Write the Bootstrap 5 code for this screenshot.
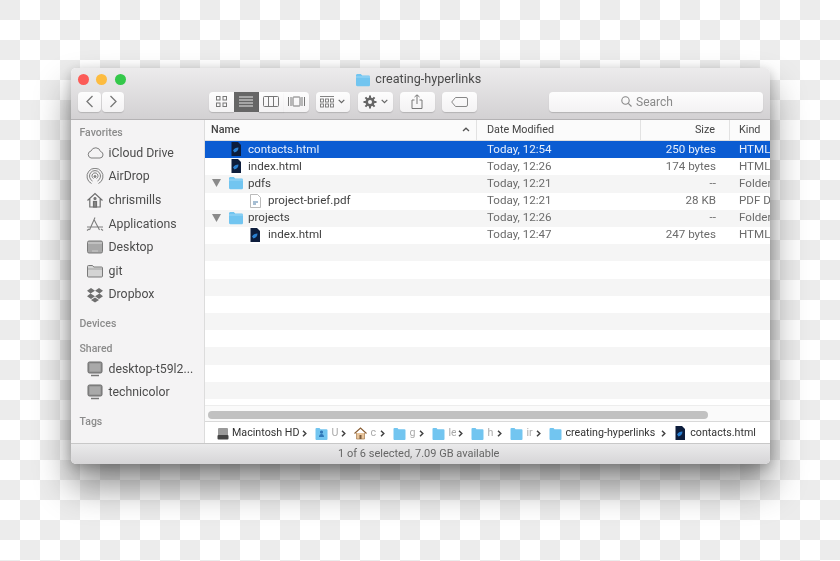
<!DOCTYPE html>
<html lang="en">
<head>
<meta charset="utf-8">
<title>creating-hyperlinks</title>
<link rel="stylesheet" href="https://cdn.jsdelivr.net/npm/bootstrap@5.3.0/dist/css/bootstrap.min.css">
<style>
html,body{height:100%;overflow:hidden}
body{background-color:#fff;background-image:conic-gradient(#fff 25%,#ececec 0 50%,#fff 0 75%,#ececec 0);background-size:40px 40px;padding:68px 0 0 70.5px;font-family:Roboto,"Liberation Sans",sans-serif;color:#3a3a3a;font-size:12px}
.fwin{width:699.5px;height:396px;border-radius:5px;overflow:hidden;background:#fff;box-shadow:0 22px 36px rgba(0,0,0,.45),0 3px 12px rgba(0,0,0,.22);filter:blur(.35px)}
.fchrome{height:52px;background:linear-gradient(#ecebec,#d3d1d3);border-bottom:1px solid #b4b2b4;flex:none}
.ftitle{height:23px;font-size:12.6px;color:#4a4a4a;padding-right:4px}
.ftitle svg{width:16px;height:14px;margin-right:4px}
.dots{left:7.3px;top:5.5px;gap:7.4px}
.dot{width:11px;height:11px;border-radius:50%}
.dot-r{background:#fc5b57}.dot-y{background:#fdbc40}.dot-g{background:#34c84a}
.ftools{height:21px;padding-left:7.5px;padding-right:7px}
.tbtn{height:20px;background:linear-gradient(#fdfdfd,#f3f2f3);border-radius:4px;box-shadow:0 1px 1px rgba(0,0,0,.16);color:#707070}
.tbtn svg{display:block}
.w23{width:23px}.w22{width:22px}.w25{width:25px}.w34{width:34px}.w35{width:35px}
.seg-on{background:#666;color:#eee;box-shadow:none;border-radius:0}
.seg{border-radius:0}.seg-l{border-radius:4px 0 0 4px}.seg-r{border-radius:0 4px 4px 0}
.fsearch{width:214px;color:#8a8a8a;font-size:12px;padding-right:18px}
.side{width:134.5px;flex:none;background:#f4f3f4;border-right:1px solid #dcdcdc;color:#4d4d4d}
.shead{height:16px;line-height:16px;padding-left:9px;font-size:10.5px;font-weight:500;color:#8b8b8b}
.sitem{height:23.6px;padding-left:15px;font-size:12.3px}
.sitem svg{width:18px;height:18px;margin-right:5px;flex:none;color:#7e7e7e}
.m-fav{margin-top:5px;margin-bottom:.2px}.m-dev{margin-top:9.6px}.m-sh{margin-top:9px}.m-tag{margin-top:9.6px}
.fmain{min-width:0;background:#fff}
.fhead{height:20.5px;flex:none;font-size:10.8px;border-bottom:1px solid #dedede;background:#fbfbfb;color:#444}
.fhead>div{height:100%;display:flex;align-items:center}
.cname{width:272px;padding-left:6px;flex:none;position:relative}
.cdate{width:164px;padding-left:10px;flex:none}
.csize{width:89px;justify-content:flex-end;padding-right:14px;flex:none;text-align:right}
.ckind{padding-left:9px;flex:none;width:40px;white-space:nowrap}
.hsep{border-right:1px solid #e2e2e2}
.caret{position:absolute;right:6px;top:7px}
.flist{flex:1 1 0;overflow:hidden;background:repeating-linear-gradient(#f5f5f5 0 17.2px,#fff 17.2px 34.4px)}
.frow{height:17.2px;font-size:11.6px;line-height:17.2px;color:#3f3f3f}
.frow>div{display:flex;align-items:center;height:100%}
.frow .cdate,.frow .csize,.frow .ckind{color:#6b6b6b}
.frow .cname{padding-left:0}
.frow.pick{background:#0b5cd2}
.frow.pick>div,.frow.pick .cdate,.frow.pick .csize,.frow.pick .ckind{color:#e8effb}
.frow .i0{padding-left:26px}.frow .i1{padding-left:45px}
.doc{width:10px;height:14px;margin-right:7px;flex:none}
.frow .i1 .doc{margin-right:8px}
.disc{width:9px;height:8px;margin-left:7px;margin-right:7px;flex:none}
.fold{width:16px;height:14px;margin-right:4px;flex:none}
.pdf{width:11px;height:14px;margin-right:7px;flex:none}
.ftrack{height:16px;flex:none;background:#fafafa;border-top:1px solid #ededed;padding:5px 62px 0 3px}
.fthumb{height:8px;border-radius:4px;background:#c1c1c1}
.fpath{height:22px;flex:none;border-top:1px solid #d9d9d9;font-size:10.7px;padding:2px 0 0 12px;white-space:nowrap;color:#333}
.crumb{width:39px;flex:none;overflow:hidden;color:#aaa}
.crumb b{font-weight:400;width:8px;overflow:hidden;display:inline-block;margin-left:3px}
.crumb svg,.pcell svg{flex:none}
.pcell{flex:none}
.chev{width:5px;height:7px;flex:none}
.crumb .gap{flex:1}
.fstatus{height:21px;flex:none;background:linear-gradient(#eaeaeb,#d6d5d7);border-top:1px solid #c8c8c8;font-size:11px;color:#666;padding-right:3px}
.fwd{margin-left:1px}.vgroup{margin-left:84.5px}.mlx7{margin-left:7px}.mlx8{margin-left:8px}.fbody{min-height:0}
.pi3{margin-right:3px}.pi5{margin-right:5px}.cm1{margin:0 8px 0 3px}.cm2{margin:0 9px 0 6px}
</style>
</head>
<body>
<svg width="0" height="0" class="position-absolute">
<defs>
<symbol id="folder" viewBox="0 0 16 14"><path d="M1 2.500C1 1.700 1.600 1 2.400 1h3.400l1.400 1.600h6.500c.8 0 1.300.6 1.300 1.300v8c0 .8-.6 1.300-1.300 1.300H2.300C1.600 13.200 1 12.700 1 12z" fill="#72c5f0"/><path d="M1 4h14" stroke="#a8dcf7" stroke-width=".8"/></symbol>
<symbol id="doc" viewBox="0 0 10 14"><path d="M.5 0H7l3 3v11H.5z" fill="#0d1d3c"/><path d="M2 8.500C3 6.500 5 5.500 7.500 5.500 7.500 8 6 10 3.500 10.500z" fill="#2a7fd0"/></symbol>
<symbol id="chev" viewBox="0 0 5 7"><path d="M1 .8 3.800 3.500 1 6.200" fill="none" stroke="#444" stroke-width="1.500"/></symbol>
<symbol id="pf" viewBox="0 0 13 13"><path d="M.5 2A1 1 0 0 1 1.500 1h3l1 1.200h6a1 1 0 0 1 1 1V12a1 1 0 0 1-1 1h-10a1 1 0 0 1-1-1z" fill="#72c5f0"/></symbol>
<symbol id="monitor" viewBox="0 0 18 18"><rect x="2" y="2" width="14" height="11" rx="1.500" fill="#8f8f8f" stroke="#6b6b6b"/><rect x="3.500" y="3.500" width="11" height="8" fill="#a9a9a9"/><path d="M5 15.500h8" stroke="#777" stroke-width="1.500"/></symbol>
</defs>
</svg>

<div class="fwin d-flex flex-column position-relative">
  <div class="fchrome">
    <div class="ftitle d-flex align-items-center justify-content-center position-relative">
      <div class="dots d-flex position-absolute"><span class="dot dot-r"></span><span class="dot dot-y"></span><span class="dot dot-g"></span></div>
      <svg><use href="#folder"/></svg><span>creating-hyperlinks</span>
    </div>
    <div class="ftools d-flex align-items-center">
      <div class="tbtn w23 d-flex align-items-center justify-content-center"><svg width="9" height="13" viewBox="0 0 9 13"><path d="M7.500 1 2 6.500 7.500 12" fill="none" stroke="#777" stroke-width="1.300"/></svg></div>
      <div class="tbtn w22 d-flex align-items-center justify-content-center fwd"><svg width="9" height="13" viewBox="0 0 9 13"><path d="M1.500 1 7 6.500 1.500 12" fill="none" stroke="#777" stroke-width="1.300"/></svg></div>
      <div class="d-flex vgroup">
        <div class="tbtn seg-l w25 d-flex align-items-center justify-content-center"><svg width="11" height="11" viewBox="0 0 11 11" fill="none" stroke="#777"><rect x=".5" y=".5" width="3.500" height="3.500"/><rect x="7" y=".5" width="3.500" height="3.500"/><rect x=".5" y="7" width="3.500" height="3.500"/><rect x="7" y="7" width="3.500" height="3.500"/></svg></div>
        <div class="tbtn seg-on w25 d-flex align-items-center justify-content-center"><svg width="14" height="11" viewBox="0 0 14 11" stroke="#e6e6e6"><path d="M0 1h14M0 4h14M0 7h14M0 10h14"/></svg></div>
        <div class="tbtn seg w25 d-flex align-items-center justify-content-center"><svg width="16" height="11" viewBox="0 0 16 11" fill="none" stroke="#777"><rect x=".5" y=".5" width="15" height="10" rx="1"/><path d="M5.500 .5v10M10.500 .5v10"/></svg></div>
        <div class="tbtn seg-r w25 d-flex align-items-center justify-content-center"><svg width="17" height="11" viewBox="0 0 17 11" fill="none" stroke="#777"><rect x="5" y="1" width="7" height="9" rx=".5"/><path d="M.5 1v9M3 1v9M14 1v9M16.500 1v9"/></svg></div>
      </div>
      <div class="tbtn w34 d-flex align-items-center justify-content-center gap-1 mlx7"><svg width="14" height="12" viewBox="0 0 14 12" fill="none" stroke="#777" stroke-width=".9"><path d="M0 .5h14"/><rect x=".5" y="3" width="3" height="3"/><rect x="5.500" y="3" width="3" height="3"/><rect x="10.500" y="3" width="3" height="3"/><rect x=".5" y="8" width="3" height="3"/><rect x="5.500" y="8" width="3" height="3"/><rect x="10.500" y="8" width="3" height="3"/></svg><svg width="7" height="5" viewBox="0 0 7 5"><path d="M.7 .8 3.500 3.700 6.300 .8" fill="none" stroke="#666" stroke-width="1.200"/></svg></div>
      <div class="tbtn w35 d-flex align-items-center justify-content-center gap-1 mlx8"><svg width="14" height="14" viewBox="0 0 14 14"><circle cx="7" cy="7" r="3.300" fill="none" stroke="#666" stroke-width="2.600"/><path d="M7 .5v3M7 10.500v3M.5 7h3M10.500 7h3M2.400 2.400l2.100 2.100M9.500 9.500l2.100 2.100M11.600 2.400 9.500 4.500M4.500 9.500l-2.100 2.100" stroke="#666" stroke-width="2"/></svg><svg width="7" height="5" viewBox="0 0 7 5"><path d="M.7 .8 3.500 3.700 6.300 .8" fill="none" stroke="#666" stroke-width="1.200"/></svg></div>
      <div class="tbtn w35 d-flex align-items-center justify-content-center mlx7"><svg width="12" height="15" viewBox="0 0 12 15" fill="none" stroke="#777"><path d="M3.500 6H1v8.500h10V6H8.500M6 10V1M3.500 3 6 .8 8.500 3"/></svg></div>
      <div class="tbtn w35 d-flex align-items-center justify-content-center mlx7"><svg width="17" height="10" viewBox="0 0 17 10" fill="none" stroke="#888"><path d="M4.500 .5h10.500a1.500 1.500 0 0 1 1.500 1.500v6a1.500 1.500 0 0 1-1.500 1.500H4.500L.7 5z"/></svg></div>
      <div class="tbtn fsearch d-flex align-items-center justify-content-center gap-1 ms-auto"><svg width="11" height="11" viewBox="0 0 11 11" fill="none" stroke="#888" stroke-width="1.100"><circle cx="4.500" cy="4.500" r="3.700"/><path d="m7.300 7.300 3.200 3.200"/></svg><span>Search</span></div>
    </div>
  </div>

  <div class="d-flex flex-grow-1 fbody">
    <div class="side">
      <div class="shead m-fav">Favorites</div>
      <div class="sitem d-flex align-items-center"><svg viewBox="0 0 18 18" fill="#f4f3f4" stroke="#7e7e7e"><path d="M5 14h9a3.300 3.300 0 0 0 .5-6.500A5 5 0 0 0 5 7 3.600 3.600 0 0 0 5 14z"/></svg>iCloud Drive</div>
      <div class="sitem d-flex align-items-center"><svg viewBox="0 0 18 18" fill="none" stroke="#7e7e7e"><path d="M5.500 15.500a8 8 0 1 1 7 0M6.500 13a5.500 5.500 0 1 1 5 0M7.500 10.500a3 3 0 1 1 3 0"/><circle cx="9" cy="8.500" r="1" fill="#7e7e7e"/></svg>AirDrop</div>
      <div class="sitem d-flex align-items-center"><svg viewBox="0 0 18 18" fill="none" stroke="#6f6f6f" stroke-width="1.200"><path d="M1.500 9.500 9 2.500l7.500 7M3.800 8v8h10.400V8"/><rect x="7.500" y="10.500" width="3" height="5.500" fill="#888"/><circle cx="9" cy="7.500" r="1" fill="#888"/></svg>chrismills</div>
      <div class="sitem d-flex align-items-center"><svg viewBox="0 0 18 18" fill="none" stroke="#7e7e7e" stroke-width="1.100"><path d="M9 2.500 3.500 15M8 4.500 13.500 15M1 12h16M1 15.500l2-1.500M17 15.500l-2-1.500"/></svg>Applications</div>
      <div class="sitem d-flex align-items-center"><svg viewBox="0 0 18 18"><rect x="1.500" y="3" width="15" height="12" rx="1.500" fill="#a8a8a8" stroke="#7a7a7a"/><path d="M2 5h14" stroke="#c9c9c9" stroke-width="1.500"/><path d="M6.500 13h5" stroke="#eee" stroke-dasharray="1 1"/></svg>Desktop</div>
      <div class="sitem d-flex align-items-center"><svg viewBox="0 0 18 18"><path d="M1.500 4.500A1 1 0 0 1 2.500 3.500h4l1.300 1.500h7.700a1 1 0 0 1 1 1v8a1 1 0 0 1-1 1h-13a1 1 0 0 1-1-1z" fill="#d4d4d4" stroke="#7a7a7a"/><path d="M2 7h14" stroke="#8e8e8e" stroke-width=".7"/></svg>git</div>
      <div class="sitem d-flex align-items-center"><svg viewBox="0 0 18 18" fill="#6f6f6f"><path d="M5 2 1 4.700l3.500 2.800L9 4.800zM13 2l4 2.700-3.500 2.800L9 4.800zM4.500 7.500 1 10.300 5 13l4-2.700zM13.500 7.500 17 10.300 13 13l-4-2.700zM5 14l4 2.500 4-2.500-4-2.500z"/></svg>Dropbox</div>
      <div class="shead m-dev">Devices</div>
      <div class="shead m-sh">Shared</div>
      <div class="sitem d-flex align-items-center"><svg><use href="#monitor"/></svg>desktop-t59l2...</div>
      <div class="sitem d-flex align-items-center"><svg><use href="#monitor"/></svg>technicolor</div>
      <div class="shead m-tag">Tags</div>
    </div>

    <div class="fmain flex-grow-1 d-flex flex-column">
      <div class="fhead d-flex">
        <div class="cname hsep fw-medium">Name<svg class="caret" width="8" height="5" viewBox="0 0 8 5"><path d="M1 4 4 1.200 7 4" fill="none" stroke="#555" stroke-width="1.300"/></svg></div>
        <div class="cdate hsep">Date Modified</div>
        <div class="csize hsep">Size</div>
        <div class="ckind">Kind</div>
      </div>
      <div class="flist">
        <div class="frow pick d-flex"><div class="cname i0"><svg class="doc"><use href="#doc"/></svg>contacts.html</div><div class="cdate">Today, 12:54</div><div class="csize">250 bytes</div><div class="ckind">HTML</div></div>
        <div class="frow d-flex"><div class="cname i0"><svg class="doc"><use href="#doc"/></svg>index.html</div><div class="cdate">Today, 12:26</div><div class="csize">174 bytes</div><div class="ckind">HTML</div></div>
        <div class="frow d-flex"><div class="cname"><svg class="disc" viewBox="0 0 9 8"><path d="M0 0h9L4.500 8z" fill="#8a8a8a"/></svg><svg class="fold"><use href="#folder"/></svg>pdfs</div><div class="cdate">Today, 12:21</div><div class="csize">--</div><div class="ckind">Folder</div></div>
        <div class="frow d-flex"><div class="cname i1"><svg class="pdf" viewBox="0 0 11 14"><path d="M.5.500h7l3 3v10H.5z" fill="#fff" stroke="#aaa" stroke-width=".8"/><path d="M3 8h5M3 10h3" stroke="#4f7fa8" stroke-width="1.200"/></svg>project-brief.pdf</div><div class="cdate">Today, 12:21</div><div class="csize">28 KB</div><div class="ckind">PDF D</div></div>
        <div class="frow d-flex"><div class="cname"><svg class="disc" viewBox="0 0 9 8"><path d="M0 0h9L4.500 8z" fill="#8a8a8a"/></svg><svg class="fold"><use href="#folder"/></svg>projects</div><div class="cdate">Today, 12:26</div><div class="csize">--</div><div class="ckind">Folder</div></div>
        <div class="frow d-flex"><div class="cname i1"><svg class="doc"><use href="#doc"/></svg>index.html</div><div class="cdate">Today, 12:47</div><div class="csize">247 bytes</div><div class="ckind">HTML</div></div>
      </div>
      <div class="ftrack"><div class="fthumb"></div></div>
      <div class="fpath d-flex align-items-center">
        <div class="pcell d-flex align-items-center"><svg width="12" height="13" viewBox="0 0 12 13" class="pi3"><rect x="1" y="1" width="10" height="8" rx="1" fill="#9a9a9a"/><rect x=".5" y="8" width="11" height="4.500" rx="1" fill="#444"/></svg>Macintosh HD</div>
        <svg class="chev cm1"><use href="#chev"/></svg>
        <div class="crumb d-flex align-items-center"><svg width="13" height="13"><use href="#pf"/><path d="M4 10c0-2 1-3 2.500-3S9 8 9 10zM6.500 3.500a1.600 1.600 0 1 0 .01 0" fill="#2f77b8"/></svg><b>U</b><span class="gap"></span><svg class="chev me-2"><use href="#chev"/></svg></div>
        <div class="crumb d-flex align-items-center"><svg width="13" height="13" viewBox="0 0 13 13"><path d="M.5 6.500 6.500 1l6 5.500" fill="none" stroke="#8a5f35" stroke-width="1.200"/><path d="M2.500 6v6h8V6" fill="#e8c49a" stroke="#a57b4e" stroke-width=".7"/><rect x="5.500" y="8" width="2" height="4" fill="#7a5a3a"/></svg><b>c</b><span class="gap"></span><svg class="chev me-2"><use href="#chev"/></svg></div>
        <div class="crumb d-flex align-items-center"><svg width="13" height="13"><use href="#pf"/></svg><b>g</b><span class="gap"></span><svg class="chev me-2"><use href="#chev"/></svg></div>
        <div class="crumb d-flex align-items-center"><svg width="13" height="13"><use href="#pf"/></svg><b>le</b><span class="gap"></span><svg class="chev me-2"><use href="#chev"/></svg></div>
        <div class="crumb d-flex align-items-center"><svg width="13" height="13"><use href="#pf"/></svg><b>h</b><span class="gap"></span><svg class="chev me-2"><use href="#chev"/></svg></div>
        <div class="crumb d-flex align-items-center"><svg width="13" height="13"><use href="#pf"/></svg><b>ir</b><span class="gap"></span><svg class="chev me-2"><use href="#chev"/></svg></div>
        <div class="pcell d-flex align-items-center"><svg width="13" height="13" class="pi3"><use href="#pf"/></svg>creating-hyperlinks</div>
        <svg class="chev cm2"><use href="#chev"/></svg>
        <div class="pcell d-flex align-items-center"><svg width="10" height="14" class="pi5"><use href="#doc"/></svg>contacts.html</div>
      </div>
    </div>
  </div>

  <div class="fstatus d-flex align-items-center justify-content-center">1 of 6 selected, 7.09 GB available</div>
</div>
<script src="https://cdn.jsdelivr.net/npm/bootstrap@5.3.0/dist/js/bootstrap.bundle.min.js"></script>
</body>
</html>
